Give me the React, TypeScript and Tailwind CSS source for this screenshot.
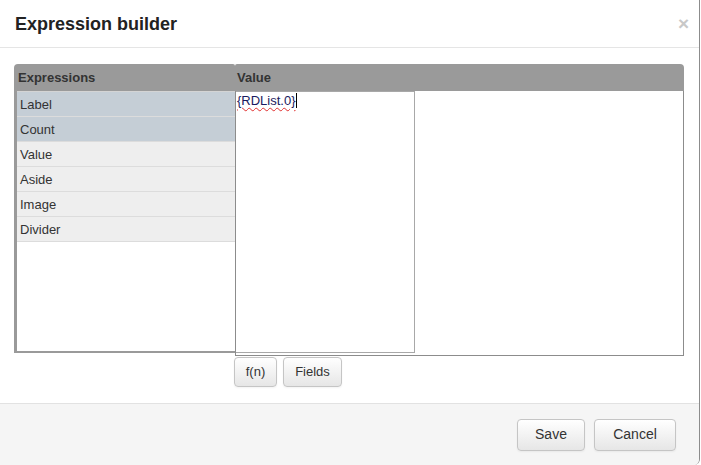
import { useState } from 'react';

const ROWS = [
  { name: 'Label', selected: true },
  { name: 'Count', selected: true },
  { name: 'Value', selected: false },
  { name: 'Aside', selected: false },
  { name: 'Image', selected: false },
  { name: 'Divider', selected: false },
];

const btn =
  'rounded-[4px] border border-[#c5c5c5] bg-gradient-to-b from-white to-[#e6e6e6] text-[#333] shadow-[inset_0_1px_0_rgba(255,255,255,0.3),0_1px_2px_rgba(0,0,0,0.05)]';

export default function App() {
  const [value] = useState('{RDList.0}');

  return (
    <div className="w-[701px] h-[465px] bg-white font-['Liberation_Sans',Arial,sans-serif] text-[#333]">
      <div className="w-[700px] h-full flex flex-col border-r border-[#8c8c8c] rounded-br-[6px] overflow-hidden">
        {/* Header */}
        <div className="h-[48px] shrink-0 flex items-center justify-between border-b border-[#e5e5e5] pl-[15px] pr-[10px]">
          <h3 className="text-[18px] font-bold text-[#222] leading-none pt-[1px]">Expression builder</h3>
          <span className="text-[19px] font-bold text-[#c8c8c8] leading-none -mt-[1px]">×</span>
        </div>

        {/* Body */}
        <div className="flex-1 pl-[14px] pt-[16px]">
          <div className="flex">
            {/* Expressions */}
            <div className="w-[221px] flex flex-col">
              <div className="h-[27px] bg-[#9a9a9a] rounded-tl-[4px] rounded-tr-[2px] flex items-center pl-[4px] text-[13px] font-bold text-[#333]">
                Expressions
              </div>
              <div className="h-[262px] border-l-[3px] border-b-[2px] border-[#9a9a9a] bg-white">
                <div className="border-t border-[#d4d4d4]">
                  {ROWS.map((r) => (
                    <div
                      key={r.name}
                      className={`h-[25px] flex items-center pl-[3px] pt-[1px] text-[13px] text-[#333] border-b border-[#dcdcdc] ${
                        r.selected ? 'bg-[#c5ced6]' : 'bg-[#eeeeee]'
                      }`}
                    >
                      {r.name}
                    </div>
                  ))}
                </div>
              </div>
            </div>

            {/* Value */}
            <div className="w-[449px] flex flex-col">
              <div className="h-[27px] bg-[#9a9a9a] rounded-tr-[4px] rounded-tl-[2px] flex items-center pl-[2px] text-[13px] font-bold text-[#333]">
                Value
              </div>
              <div className="h-[265px] border-x border-b border-[#8c8c8c] bg-white">
                <div className="w-[179px] h-[262px] border border-[#a8a8a8] border-l-0 pl-[1px] pt-[1px] text-[13px] leading-[15px]">
                  <span className="text-[#1a1a60] underline decoration-wavy decoration-[#e03030] decoration-[1px] underline-offset-[2px]">
                    {value}
                  </span>
                  <span className="inline-block w-px h-[15px] bg-black align-[-3px]" />
                </div>
              </div>
              <div className="flex gap-[6px] mt-[1px] -ml-[1px]">
                <button className={`${btn} w-[43px] h-[30px] text-[13px]`}>f(n)</button>
                <button className={`${btn} w-[59px] h-[30px] text-[13px]`}>Fields</button>
              </div>
            </div>
          </div>
        </div>

        {/* Footer */}
        <div className="h-[62px] shrink-0 bg-[#f5f5f5] border-t border-[#e2e2e2] flex items-center justify-end gap-[9px] pr-[23px]">
          <button className={`${btn} w-[68px] h-[32px] text-[14px]`}>Save</button>
          <button className={`${btn} w-[82px] h-[32px] text-[14px]`}>Cancel</button>
        </div>
      </div>
    </div>
  );
}
